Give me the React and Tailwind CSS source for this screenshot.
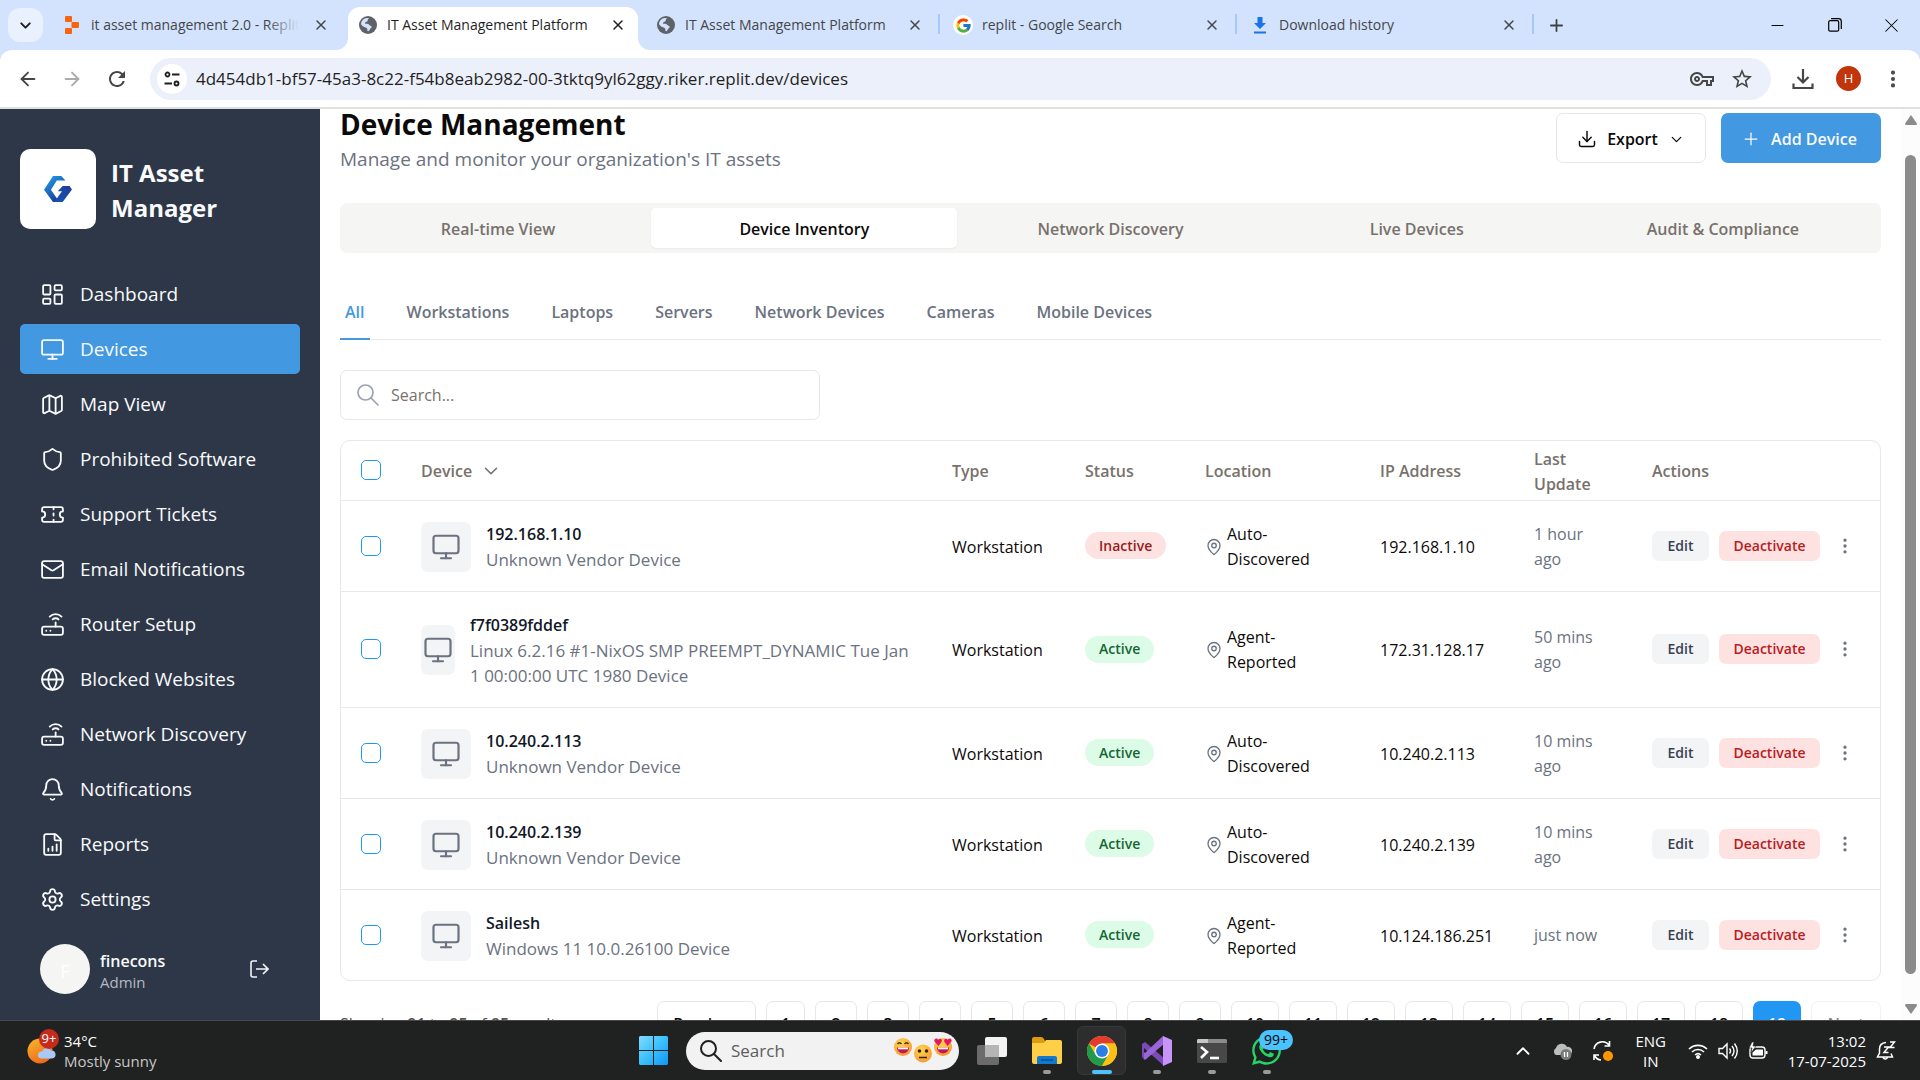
import React from "react";
import {
  LayoutDashboard, Monitor, Map as MapIcon, Shield, Ticket, Mail, Router, Globe, Bell,
  FileChartColumnIncreasing, Settings, Download, ChevronDown, Plus, MapPin,
  EllipsisVertical, ArrowLeft, ArrowRight, X, Minus, ChevronUp,
} from "lucide-react";
import { FcGoogle } from "react-icons/fc";
import { FaWhatsapp } from "react-icons/fa";
import { MdStarBorder, MdRefresh, MdOutlineVpnKey } from "react-icons/md";

const MagnifierIcon = ({ color, weight }) => (
  <svg viewBox="0 0 22 22" className="size-[22px] shrink-0" fill="none" stroke={color} strokeWidth={weight} strokeLinecap="round">
    <circle cx="8.500" cy="8.500" r="7.500" /><path d="M14 14l7 7" />
  </svg>
);

/* ---------- Browser chrome ---------- */

const ReplitIcon = () => (
  <svg viewBox="0 0 14 18" className="h-[18px] w-[14px] shrink-0" fill="#f5640f">
    <rect x="0" y="0" width="7" height="6" rx="1" />
    <rect x="6.5" y="6" width="7.5" height="6" rx="1" />
    <rect x="0" y="12" width="7" height="6" rx="1" />
  </svg>
);

const EarthIcon = () => (
  <svg viewBox="0 0 18 18" className="size-[18px] shrink-0">
    <circle cx="9" cy="9" r="9" fill="#5f6368" />
    <path
      d="M10.2 2.2c-1 .6-1.6 1.3-1.5 2.3.1.8-.5 1-1.300 1.300-1 .4-1.400 1-1.300 1.900 1.400.1 3.200-.3 3.900.9.5.9 1.300 1.100 2.100 1.400.8.3.7 1.500-.1 2.100-.9.6-1 1.600-1.800 2.500-.6.6-1.200 1-1.600.4-.4-.8 0-1.900-.6-2.600C7 11.400 5 11.300 3.300 9.800L2 8.300C2 5 4.500 2.100 8 1.900z"
      fill="#d3e3fd"
    />
    <path d="M11.500 4.200l2.400.2 1.800 2.500-.9 1.500-2-.6-1.500-1.600z" fill="#5f6368" />
  </svg>
);

const BlueDownloadIcon = () => (
  <svg viewBox="0 0 14 18" className="h-[18px] w-[14px] shrink-0" fill="#1a73e8">
    <path d="M4.500 1h5v6H13l-6 6-6-6h3.500zM1 15.500h12v2H1z" />
  </svg>
);

const GoogleIcon = () => (
  <span className="flex size-5 shrink-0 items-center justify-center rounded-full bg-white">
    <FcGoogle size={17} />
  </span>
);

const browserTabs = [
  { title: "it asset management 2.0 - Replit", icon: ReplitIcon, fade: true },
  { title: "IT Asset Management Platform", icon: EarthIcon, active: true },
  { title: "IT Asset Management Platform", icon: EarthIcon, sep: true },
  { title: "replit - Google Search", icon: GoogleIcon, sep: true },
  { title: "Download history", icon: BlueDownloadIcon, sep: true },
];

function BrowserTab({ title, icon: Icon, active, fade, sep }) {
  return (
    <div
      className={
        active
          ? "relative mt-[7px] mr-[7px] flex h-[43px] w-[290px] items-center rounded-t-xl bg-white pr-[10px] pb-[7px] pl-[10px] text-[#1f1f1f]"
          : "relative mt-[7px] flex h-[43px] w-[297px] items-center pr-[17px] pb-[7px] pl-[11px] text-[#44474a]"
      }
    >
      {active && (
        <>
          <svg viewBox="0 0 12 12" className="absolute bottom-0 -left-3 size-3" fill="#fff"><path d="M12 0v12H0A12 12 0 0 0 12 0z" /></svg>
          <svg viewBox="0 0 12 12" className="absolute -right-3 bottom-0 size-3" fill="#fff"><path d="M0 0v12h12A12 12 0 0 1 0 0z" /></svg>
        </>
      )}
      <span className="flex w-5 shrink-0 justify-center"><Icon /></span>
      <span className="relative ml-[9px] flex-1 overflow-hidden text-sm whitespace-nowrap">
        {title}
        {fade && <span className="absolute inset-y-0 right-0 w-8 bg-gradient-to-r from-transparent to-[#d3e3fd]" />}
      </span>
      <button aria-label={"Close " + title} className="ml-3 flex size-5 items-center justify-center"><X size={16} strokeWidth={2.25} /></button>
      {sep && <span className="absolute top-[7px] right-[2px] h-5 w-[2px] bg-[#a8c7fa]" />}
    </div>
  );
}

function BrowserChrome() {
  return (
    <header className="shrink-0 bg-[#d3e3fd]">
      <div className="flex h-[50px]">
        <button aria-label="Search tabs" className="mt-2 mr-[8px] ml-2 flex h-[34px] w-[35px] items-center justify-center rounded-xl bg-[#e9f0fe]">
          <ChevronDown size={17} strokeWidth={2.75} color="#1f1f1f" />
        </button>
        {browserTabs.map((t, i) => <BrowserTab key={i} {...t} />)}
        <button aria-label="New tab" className="ml-[3px] flex size-[34px] items-center justify-center self-center text-[#3c4043]"><Plus size={19} strokeWidth={2.25} /></button>
        <div className="ml-auto flex items-center">
          <button aria-label="Minimize" className="flex h-12 w-[57px] items-center justify-center"><Minus size={19} strokeWidth={1.25} /></button>
          <button aria-label="Restore" className="flex h-12 w-[57px] items-center justify-center">
            <svg viewBox="0 0 14 14" className="size-[14px]" fill="none" stroke="#000" strokeWidth="1.200">
              <rect x="0.700" y="2.700" width="10" height="10.500" rx="1.500" />
              <path d="M3 .7h7.500a2.800 2.800 0 0 1 2.800 2.800V11" />
            </svg>
          </button>
          <button aria-label="Close window" className="flex h-12 w-[57px] items-center justify-center"><X size={23} strokeWidth={1.100} /></button>
        </div>
      </div>
      <div className="flex h-[59px] items-center rounded-t-xl border-b-2 border-[#e0e0e0] bg-white pr-4 pl-4 text-[#444746]">
        <button aria-label="Back" className="flex size-6 items-center justify-center"><ArrowLeft size={22} strokeWidth={2} /></button>
        <button aria-label="Forward" className="ml-5 flex size-6 items-center justify-center text-[#a9abad]"><ArrowRight size={22} strokeWidth={2} /></button>
        <button aria-label="Reload" className="ml-[21px] flex size-6 items-center justify-center"><MdRefresh size={24} /></button>
        <div className="ml-[21px] flex h-[42px] flex-1 items-center rounded-full bg-[#ecf0fa] pr-[17px] pl-[7px]">
          <button aria-label="Site information" className="flex size-[30px] items-center justify-center rounded-full bg-white">
            <svg viewBox="0 0 16 16" className="size-4" fill="none" stroke="#1f1f1f" strokeWidth="1.800">
              <circle cx="3.500" cy="3.500" r="2" /><path d="M8 3.500h7.500M.5 12.500H8" /><circle cx="12.500" cy="12.500" r="2" />
            </svg>
          </button>
          <input
            type="text"
            aria-label="Address"
            defaultValue="4d454db1-bf57-45a3-8c22-f54b8eab2982-00-3tktq9yl62ggy.riker.replit.dev/devices"
            className="ml-[9px] h-[30px] flex-1 bg-transparent text-[17px] text-[#1f1f1f] outline-none"
          />
          <button aria-label="Passwords" className="mr-4"><MdOutlineVpnKey size={24} /></button>
          <button aria-label="Bookmark"><MdStarBorder size={24} /></button>
        </div>
        <button aria-label="Downloads" className="ml-[21px] flex">
          <svg viewBox="0 0 22 22" className="size-[22px]" fill="none" stroke="#444746" strokeWidth="2.200"><path d="M11 1v13M5.500 9l5.500 5.500L16.500 9M1.500 15.500v4.500h19v-4.500" /></svg>
        </button>
        <button aria-label="Profile" className="ml-[22px] flex size-[25px] items-center justify-center rounded-full bg-[#c0350c] text-[13px] text-white">H</button>
        <button aria-label="Menu" className="ml-[21px]"><EllipsisVertical size={22} strokeWidth={2.500} /></button>
      </div>
    </header>
  );
}

/* ---------- Sidebar ---------- */

const navItems = [
  ["Dashboard", LayoutDashboard],
  ["Devices", Monitor],
  ["Map View", MapIcon],
  ["Prohibited Software", Shield],
  ["Support Tickets", Ticket],
  ["Email Notifications", Mail],
  ["Router Setup", Router],
  ["Blocked Websites", Globe],
  ["Network Discovery", Router],
  ["Notifications", Bell],
  ["Reports", FileChartColumnIncreasing],
  ["Settings", Settings],
];

function Logo() {
  return (
    <svg viewBox="0 0 81 78" className="w-7">
      <defs>
        <linearGradient id="logoA" x1="0" y1="0" x2="0.600" y2="1">
          <stop offset="0" stopColor="#22a7ea" /><stop offset="0.500" stopColor="#1c6fc4" /><stop offset="1" stopColor="#193a8c" />
        </linearGradient>
        <linearGradient id="logoB" x1="1" y1="0" x2="0" y2="1">
          <stop offset="0" stopColor="#1c3f99" /><stop offset="1" stopColor="#1a56b5" />
        </linearGradient>
      </defs>
      <path d="M0 40L26 0h24l12 13H37L20 40l18 26v12H28z" fill="url(#logoA)" />
      <path d="M54 29h20l7 10-29 39H28l10-14 14-20H40z" fill="url(#logoB)" />
    </svg>
  );
}

function Sidebar() {
  return (
    <aside className="flex w-80 shrink-0 flex-col bg-[#2d3748] px-5 pt-10 text-[#f9fafb]">
      <div className="flex items-center gap-[15px]">
        <div className="flex h-20 w-[76px] items-center justify-center rounded-[10px] bg-white"><Logo /></div>
        <h2 className="w-32 pt-[2px] text-2xl leading-[35px] font-bold">IT Asset Manager</h2>
      </div>
      <nav className="mt-10 flex flex-col gap-[5px]">
        {navItems.map(([label, Icon]) => (
          <a
            key={label}
            href="#"
            className={
              label === "Devices"
                ? "flex h-[50px] items-center gap-[15px] rounded-[5px] bg-[#4299e1] px-5 text-[19px]"
                : "flex h-[50px] items-center gap-[15px] rounded-[5px] px-5 text-[19px]"
            }
          >
            <Icon size={25} strokeWidth={1.750} />
            {label}
          </a>
        ))}
      </nav>
      <div className="mt-5 flex items-center px-5">
        <div className="flex size-[50px] items-center justify-center rounded-full bg-[#f5f5f4] pt-1 text-lg text-white">F</div>
        <div className="ml-[10px] pt-[3px]">
          <div className="text-base leading-[22px] font-semibold">finecons</div>
          <div className="text-[15px] leading-5 text-[#b4bac4]">Admin</div>
        </div>
        <button aria-label="Log out" className="mr-[11px] ml-auto">
          <svg viewBox="0 0 20 20" className="size-5" fill="none" stroke="#f3f4f6" strokeWidth="1.600"><path d="M8 2H4a2 2 0 0 0-2 2v12a2 2 0 0 0 2 2h4M7 10h11.500M14 5l5 5-5 5" /></svg>
        </button>
      </div>
    </aside>
  );
}

/* ---------- Main content ---------- */

const sections = ["Real-time View", "Device Inventory", "Network Discovery", "Live Devices", "Audit & Compliance"];
const filters = ["All", "Workstations", "Laptops", "Servers", "Network Devices", "Cameras", "Mobile Devices"];
const devices = [
  { name: "192.168.1.10", desc: "Unknown Vendor Device", status: "Inactive", loc: ["Auto-", "Discovered"], ip: "192.168.1.10", last: "1 hour ago" },
  { name: "f7f0389fddef", desc: "Linux 6.2.16 #1-NixOS SMP PREEMPT_DYNAMIC Tue Jan 1 00:00:00 UTC 1980 Device", status: "Active", loc: ["Agent-", "Reported"], ip: "172.31.128.17", last: "50 mins ago" },
  { name: "10.240.2.113", desc: "Unknown Vendor Device", status: "Active", loc: ["Auto-", "Discovered"], ip: "10.240.2.113", last: "10 mins ago" },
  { name: "10.240.2.139", desc: "Unknown Vendor Device", status: "Active", loc: ["Auto-", "Discovered"], ip: "10.240.2.139", last: "10 mins ago" },
  { name: "Sailesh", desc: "Windows 11 10.0.26100 Device", status: "Active", loc: ["Agent-", "Reported"], ip: "10.124.186.251", last: "just now" },
];
const pages = Array.from({ length: 19 }, (_, i) => i + 1);

const Check = ({ label }) => (
  <input type="checkbox" aria-label={label} className="block size-5 appearance-none rounded-[5px] border border-[#2196f3] bg-white" />
);

function DeviceRow({ d }) {
  return (
    <tr className="border-t border-[#e5e7eb]">
      <td className="pl-5"><Check label={"Select " + d.name} /></td>
      <td className="px-5 pt-[21px] pb-[19px]">
        <div className="flex items-center">
          <div className={d.desc.length > 40 ? "flex h-[50px] w-[34px] shrink-0 items-center justify-center rounded-[7px] bg-[#f3f4f6] text-[#6b7280]" : "flex size-[50px] shrink-0 items-center justify-center rounded-[7px] bg-[#f3f4f6] text-[#6b7280]"}>
            <Monitor size={30} strokeWidth={1.750} />
          </div>
          <div className="ml-[15px] leading-[25px]">
            <div className="font-semibold text-[#111827]">{d.name}</div>
            <div className="text-[17px] text-[#6b7280]">{d.desc}</div>
          </div>
        </div>
      </td>
      <td className="pt-[2px] pl-5">Workstation</td>
      <td className="pl-5">
        <span
          className={
            d.status === "Active"
              ? "inline-flex h-[27px] items-center rounded-full bg-[#dcfce7] px-[14px] text-sm font-semibold text-[#166534]"
              : "inline-flex h-[27px] items-center rounded-full bg-[#fee2e2] px-[14px] text-sm font-semibold text-[#991b1b]"
          }
        >
          {d.status}
        </span>
      </td>
      <td className="pt-[2px] pl-5">
        <div className="flex items-center gap-1 leading-[25px]">
          <MapPin size={18} color="#6b7280" strokeWidth={1.750} />
          <div>{d.loc[0]}<br />{d.loc[1]}</div>
        </div>
      </td>
      <td className="pt-[2px] pl-5">{d.ip}</td>
      <td className="pt-[2px] pr-6 pl-5 leading-[25px] text-[#6b7280]">{d.last}</td>
      <td className="pl-5">
        <div className="flex items-center">
          <button className="h-[30px] w-[57px] rounded-[7px] bg-[#f3f4f6] text-sm font-semibold text-[#374151]">Edit</button>
          <button className="ml-[10px] h-[30px] w-[101px] rounded-[7px] bg-[#fee2e2] text-sm font-semibold text-[#b91c1c]">Deactivate</button>
          <button aria-label={"More actions for " + d.name} className="ml-[15px] text-[#6b7280]"><EllipsisVertical size={20} /></button>
        </div>
      </td>
    </tr>
  );
}

function DeviceTable() {
  return (
    <div className="mt-5 rounded-[10px] border border-[#e5e7eb] text-[#0c0a09]">
      <table className="w-full table-fixed border-collapse text-left">
        <colgroup>
          <col className="w-[60px]" /><col /><col className="w-[133px]" /><col className="w-[120px]" />
          <col className="w-[175px]" /><col className="w-[154px]" /><col className="w-[118px]" /><col className="w-[248px]" />
        </colgroup>
        <thead>
          <tr className="h-[59px] text-[#78716c]">
            <th className="pl-5"><Check label="Select all devices" /></th>
            <th className="px-5 pt-[2px] font-semibold">
              <button className="flex items-center gap-2">Device <ChevronDown size={22} strokeWidth={1.750} /></button>
            </th>
            <th className="pt-[2px] pl-5 font-semibold">Type</th>
            <th className="pt-[2px] pl-5 font-semibold">Status</th>
            <th className="pt-[2px] pl-5 font-semibold">Location</th>
            <th className="pt-[2px] pl-5 font-semibold">IP Address</th>
            <th className="pt-[4px] pr-5 pl-5 leading-[25px] font-semibold">Last Update</th>
            <th className="pt-[2px] pl-5 font-semibold">Actions</th>
          </tr>
        </thead>
        <tbody>{devices.map((d) => <DeviceRow key={d.name} d={d} />)}</tbody>
      </table>
    </div>
  );
}

function Pagination() {
  return (
    <div className="mt-5 flex items-center justify-between whitespace-nowrap">
      <p className="text-[#57534e]">Showing <b className="font-semibold">91</b> to <b className="font-semibold">95</b> of <b className="font-semibold">95</b> results</p>
      <div className="flex gap-[10px] font-semibold text-[#0c0a09]">
        <button className="h-[46px] w-[99px] rounded-[7px] border border-[#e5e7eb]">Previous</button>
        {pages.map((p) => (
          <button
            key={p}
            className={
              p === 19
                ? "h-[46px] w-12 rounded-[7px] bg-[#2196f3] text-white"
                : p > 9
                ? "h-[46px] w-12 rounded-[7px] border border-[#e5e7eb]"
                : p === 1
                ? "h-[46px] w-[39px] rounded-[7px] border border-[#e5e7eb]"
                : "h-[46px] w-[42px] rounded-[7px] border border-[#e5e7eb]"
            }
          >
            {p}
          </button>
        ))}
        <button disabled className="h-[46px] w-[70px] rounded-[7px] border border-[#e5e7eb] opacity-50">Next</button>
      </div>
    </div>
  );
}

function MainContent() {
  return (
    <main className="min-w-0 flex-1 overflow-hidden bg-white px-5 text-base">
      <div className="flex items-start justify-between">
        <div>
          <h1 className="text-[28px] leading-[30px] font-bold text-[#0c0a09]">Device Management</h1>
          <p className="mt-[6px] text-[19px] leading-7 text-[#6b7280]">Manage and monitor your organization's IT assets</p>
        </div>
        <div className="mt-1 flex gap-[15px] font-semibold">
          <button className="flex h-[50px] w-[150px] items-center justify-center gap-[10px] rounded-[7px] border border-[#e5e7eb] pt-[2px] text-[#0c0a09]">
            <Download size={20} strokeWidth={1.750} />Export<ChevronDown size={17} strokeWidth={1.750} />
          </button>
          <button className="flex h-[50px] w-40 items-center justify-center gap-[10px] rounded-[7px] bg-[#4299e1] pt-[2px] pr-1 text-[#f8fafc]">
            <Plus size={20} strokeWidth={1.500} />Add Device
          </button>
        </div>
      </div>

      <div role="tablist" className="mt-[30px] grid h-[50px] grid-cols-5 rounded-[7px] bg-[#f5f5f4] p-[5px] font-semibold text-[#78716c]">
        {sections.map((s) => (
          <button key={s} role="tab" className={s === "Device Inventory" ? "rounded-[5px] bg-white pt-[2px] text-[#0c0a09] shadow-xs" : "rounded-[5px] pt-[2px]"}>{s}</button>
        ))}
      </div>

      <div role="tablist" className="mt-[35px] flex h-[52px] gap-8 border-b border-[#e5e7eb] font-semibold text-[#6b7280]">
        {filters.map((f) => (
          <button
            key={f}
            role="tab"
            className={f === "All" ? "-mb-px border-b-2 border-[#4299e1] px-[5px] pb-[2px] text-[#4299e1]" : "px-[5px] pb-[3px]"}
          >
            {f}
          </button>
        ))}
      </div>

      <label className="mt-[30px] flex h-[50px] w-[480px] items-center rounded-[7px] border border-[#e5e7eb] pr-4 pl-4">
        <MagnifierIcon color="#9ca3af" weight="1.700" />
        <input type="text" aria-label="Search devices" placeholder="Search..." className="ml-3 h-8 flex-1 outline-none placeholder:text-[#78716c]" />
      </label>

      <DeviceTable />
      <Pagination />
    </main>
  );
}

function ScrollRail() {
  return (
    <div className="flex w-[19px] shrink-0 flex-col items-center bg-[#fcfcfc] py-[6px]" aria-hidden="true">
      <svg viewBox="0 0 12 10" className="h-[10px] w-3" fill="#8b8b8b"><path d="M6 0l6 8.500q0 1.500-1 1.500H1Q0 10 0 8.500z" /></svg>
      <div className="mt-[30px] mb-[30px] w-[11px] flex-1 rounded-full bg-[#8b8b8b]" />
      <svg viewBox="0 0 12 10" className="h-[10px] w-3" fill="#8b8b8b"><path d="M6 10L0 1.500Q0 0 1 0h10q1 0 1 1.500z" /></svg>
    </div>
  );
}

/* ---------- Taskbar ---------- */

function WeatherIcon() {
  return (
    <svg viewBox="0 0 30 26" className="h-[26px] w-[30px]">
      <defs><linearGradient id="sun" x1="0" y1="0" x2="0.500" y2="1"><stop offset="0" stopColor="#f9b82c" /><stop offset="1" stopColor="#ee6c1a" /></linearGradient></defs>
      <circle cx="13" cy="13" r="12.500" fill="url(#sun)" />
      <path d="M14 20.500a3.500 3.500 0 0 1 1-7 5 5 0 0 1 9-1 4 4 0 0 1 1 8z" fill="#a9c8f5" />
    </svg>
  );
}

function WindowsIcon() {
  return (
    <svg viewBox="0 0 29 29" className="size-[29px]">
      <defs><linearGradient id="win" x1="0" y1="0" x2="1" y2="1"><stop offset="0" stopColor="#7fdcff" /><stop offset="0.500" stopColor="#3cc0fb" /><stop offset="1" stopColor="#0f95f5" /></linearGradient></defs>
      <path d="M1 0h13v14H0V1zM15 0h13l1 1v13H15zM0 15h14v14H1l-1-1zM15 15h14v13l-1 1H15z" fill="url(#win)" />
    </svg>
  );
}

function Emojis() {
  return (
    <svg viewBox="0 0 60 28" className="h-7 w-[60px]">
      <defs><radialGradient id="face" cx="0.400" cy="0.300" r="0.800"><stop offset="0" stopColor="#ffd84d" /><stop offset="1" stopColor="#f59331" /></radialGradient></defs>
      <circle cx="10" cy="10" r="9" fill="url(#face)" />
      <path d="M4.500 7q2-2.500 4 0M11.500 7q2-2.500 4 0" stroke="#4b2a14" strokeWidth="1.500" fill="none" />
      <path d="M4 10.500h12a6 6 0 0 1-12 0z" fill="#c2185b" /><path d="M5 10.500h10v1.800H5z" fill="#fff" />
      <circle cx="30" cy="16.500" r="9" fill="url(#face)" />
      <circle cx="26.500" cy="14" r="1.800" fill="#3a2412" /><circle cx="33.500" cy="14" r="1.800" fill="#3a2412" />
      <path d="M26 20.500h8" stroke="#3a2412" strokeWidth="1.500" />
      <circle cx="50" cy="10" r="9" fill="url(#face)" />
      <path d="M44 10.500h12a6 6 0 0 1-12 0z" fill="#c2185b" /><path d="M45 10.500h10v1.800H45z" fill="#fff" />
      <path d="M45.500 9l-4-4.500c-1-3 2.500-4 3.700-1.800C47 .5 50 2 48.500 5zM54.500 9l4-4.500c1-3-2.500-4-3.700-1.800C53 .5 50 2 51.500 5z" fill="#e8175d" />
    </svg>
  );
}

const TaskViewIcon = () => (
  <svg viewBox="0 0 30 28" className="h-7 w-[30px]">
    <rect x="0" y="8" width="22" height="20" rx="2" fill="#6b6b6b" />
    <rect x="8" y="0" width="22" height="20" rx="2" fill="#f3f3f3" />
    <path d="M8 8h14v12H8z" fill="#b5b5b5" />
  </svg>
);

const FolderIcon = () => (
  <svg viewBox="0 0 30 27" className="h-[27px] w-[30px]">
    <path d="M0 2q0-2 2-2h7q2 0 3 2l1 2H28v8H0z" fill="#dd9b10" />
    <path d="M0 6h12l2-3h14q2 0 2 2v20q0 2-2 2H2q-2 0-2-2z" fill="#ffcf48" />
    <path d="M5 27v-6q0-2 2-2h16q2 0 2 2v6z" fill="#1379cf" />
    <path d="M9 23h12" stroke="#0b4f8f" strokeWidth="1.500" />
  </svg>
);

const ChromeIcon = () => (
  <svg viewBox="0 0 48 48" className="size-[30px]">
    <circle cx="24" cy="24" r="24" fill="#fbc116" />
    <path d="M24 24L3.200 12A24 24 0 0 1 44.800 12H24z" fill="#e33b2e" />
    <path d="M3.200 12A24 24 0 0 0 24 48L34.400 30 24 24 13.600 30z" fill="#219a4b" />
    <path d="M24 12h20.800A24 24 0 0 1 24 48l10.400-18z" fill="#fbc116" />
    <circle cx="24" cy="24" r="12" fill="#fff" />
    <circle cx="24" cy="24" r="9.500" fill="#2b7de9" />
  </svg>
);

const VisualStudioIcon = () => (
  <svg viewBox="0 0 30 30" className="size-[30px]">
    <path d="M0 8l3-2 18 15v8L2 12v10l-2-1z" fill="#7b49b8" />
    <path d="M0 21l3 3L21 9V0L3 17l-1-1v6z" fill="#9a65d8" />
    <path d="M21 0l9 4v22l-9 4z" fill="#c795fa" />
    <path d="M21 9v12l-7-6z" fill="#202020" />
  </svg>
);

const TerminalIcon = () => (
  <svg viewBox="0 0 30 24" className="h-6 w-[30px]">
    <rect width="30" height="24" rx="1.500" fill="#484848" />
    <path d="M0 1.500Q0 0 1.500 0h27Q30 0 30 1.500V4H0z" fill="#8b8b8b" /><path d="M0 1.500Q0 0 1.500 0H11v4H0z" fill="#c6c6c6" />
    <path d="M4 8l6 5-6 6" stroke="#fff" strokeWidth="2.600" fill="none" /><path d="M13 19h9" stroke="#fff" strokeWidth="2.600" />
  </svg>
);

const apps = [
  { label: "Task View", icon: TaskViewIcon },
  { label: "File Explorer", icon: FolderIcon, running: true },
  { label: "Google Chrome", icon: ChromeIcon, active: true },
  { label: "Visual Studio", icon: VisualStudioIcon, running: true },
  { label: "Terminal", icon: TerminalIcon, running: true },
  { label: "WhatsApp", icon: () => <FaWhatsapp size={33} color="#25d366" />, running: true, badge: "99+" },
];

function TaskbarApp({ label, icon: Icon, running, active, badge }) {
  return (
    <button
      aria-label={label}
      className={
        active
          ? "relative mx-[3px] flex size-[49px] items-center justify-center rounded-md border border-[#383838] bg-[#2d2d2d]"
          : "relative mx-[3px] flex size-[49px] items-center justify-center"
      }
    >
      <Icon />
      {running && <span className="absolute bottom-px h-1 w-2 rounded-full bg-[#9a9a9a]" />}
      {active && <span className="absolute bottom-0 h-1 w-5 rounded-full bg-[#4cc2ff]" />}
      {badge && <span className="absolute top-1 left-[17px] flex h-5 w-[34px] items-center justify-center rounded-full bg-[#4cc2ff] text-sm text-black">{badge}</span>}
    </button>
  );
}

function Taskbar() {
  return (
    <footer className="flex h-[60px] shrink-0 items-center border-t border-[#484848] bg-[#202121] text-[15px] text-white">
      <div className="flex flex-1 items-center pl-[27px]">
        <div className="relative">
          <WeatherIcon />
          <span className="absolute -top-[9px] left-3 flex size-5 items-center justify-center rounded-full bg-[#c42b1c] text-[13px]">9+</span>
        </div>
        <div className="ml-[7px] leading-5">
          <div>34°C</div>
          <div className="text-[#c8c8c8]">Mostly sunny</div>
        </div>
      </div>
      <div className="flex items-center pr-[3px]">
        <button aria-label="Start" className="flex h-[49px] w-[55px] items-center justify-center"><WindowsIcon /></button>
        <label className="mx-[5px] flex h-[38px] w-[273px] items-center rounded-full bg-[#f2f2f2] pr-[6px] pl-[14px]">
          <MagnifierIcon color="#1f1f1f" weight="2" />
          <input type="text" aria-label="Search Windows" placeholder="Search" className="ml-[9px] h-8 w-0 flex-1 text-[17px] outline-none placeholder:text-[#5d5d5d]" />
          <Emojis />
        </label>
        {apps.map((a) => <TaskbarApp key={a.label} {...a} />)}
      </div>
      <div className="flex flex-1 items-center justify-end pr-6">
        <ChevronUp size={22} strokeWidth={2} />
        <svg viewBox="0 0 20 20" className="ml-[18px] size-5">
          <path d="M4 14a4 4 0 0 1 0-7 6 6 0 0 1 11-1 4 4 0 0 1 2 8z" fill="#bdbdbd" /><circle cx="14" cy="13.500" r="5.500" fill="#7a7a7a" />
          <path d="M12.500 11v5M15.500 11v5" stroke="#fff" strokeWidth="1.300" />
        </svg>
        <svg viewBox="0 0 22 22" className="ml-5 size-[22px]" fill="none" stroke="#fff" strokeWidth="1.600">
          <path d="M2 9a8.500 8.500 0 0 1 15-4M17.500 1v5h-5M2 20v-5h5M2.500 15.500Q5 20 9 20" /><circle cx="16" cy="16" r="5" fill="#ff9800" stroke="none" />
        </svg>
        <div className="ml-[21px] w-[32px] text-center leading-5"><div>ENG</div><div>IN</div></div>
        <svg viewBox="0 0 20 16" className="ml-[21px] h-4 w-5" fill="none" stroke="#fff" strokeWidth="1.600">
          <path d="M1 6a13 13 0 0 1 18 0M4 9a8.500 8.500 0 0 1 12 0M7 12a4.500 4.500 0 0 1 6 0" /><circle cx="10" cy="14" r="1.200" fill="#fff" />
        </svg>
        <svg viewBox="0 0 20 18" className="ml-[10px] h-[18px] w-5" fill="none" stroke="#fff" strokeWidth="1.400">
          <path d="M1 6.500h3.500L9 2v14l-4.500-4.500H1zM11.500 6.500q2 2.500 0 5M14 4q4 5 0 10M16.500 1.500q5.500 7.500 0 15" />
        </svg>
        <svg viewBox="0 0 20 18" className="ml-[10px] h-[18px] w-5" fill="none" stroke="#fff" strokeWidth="1.400">
          <rect x="2" y="5" width="15" height="11" rx="3" /><path d="M8 7.500h7v6H4.500v-3z" fill="#fff" stroke="none" /><path d="M18.500 9v3" strokeWidth="2" /><path d="M4 0L1 6h3l-1 5 5-7H5l1-4z" fill="#fff" stroke="#202121" strokeWidth="0.600" />
        </svg>
        <div className="ml-5 text-right leading-5"><div>13:02</div><div>17-07-2025</div></div>
        <svg viewBox="0 0 20 20" className="ml-[10px] size-5" fill="none" stroke="#fff" strokeWidth="1.500">
          <path d="M10 1.500Q3.500 2 3.500 8v4L1.500 16h15L15 12.500M7 16.500a2.500 2.500 0 0 0 4.500 0" /><path d="M8 6h4.500L8 11.500h4.500M14 1h4.500L14 6.500h4.500" />
        </svg>
      </div>
    </footer>
  );
}

export default function App() {
  return (
    <div className="flex h-screen flex-col overflow-hidden bg-white font-['Open_Sans',sans-serif]">
      <BrowserChrome />
      <div className="flex min-h-0 flex-1">
        <Sidebar />
        <MainContent />
        <ScrollRail />
      </div>
      <Taskbar />
    </div>
  );
}
